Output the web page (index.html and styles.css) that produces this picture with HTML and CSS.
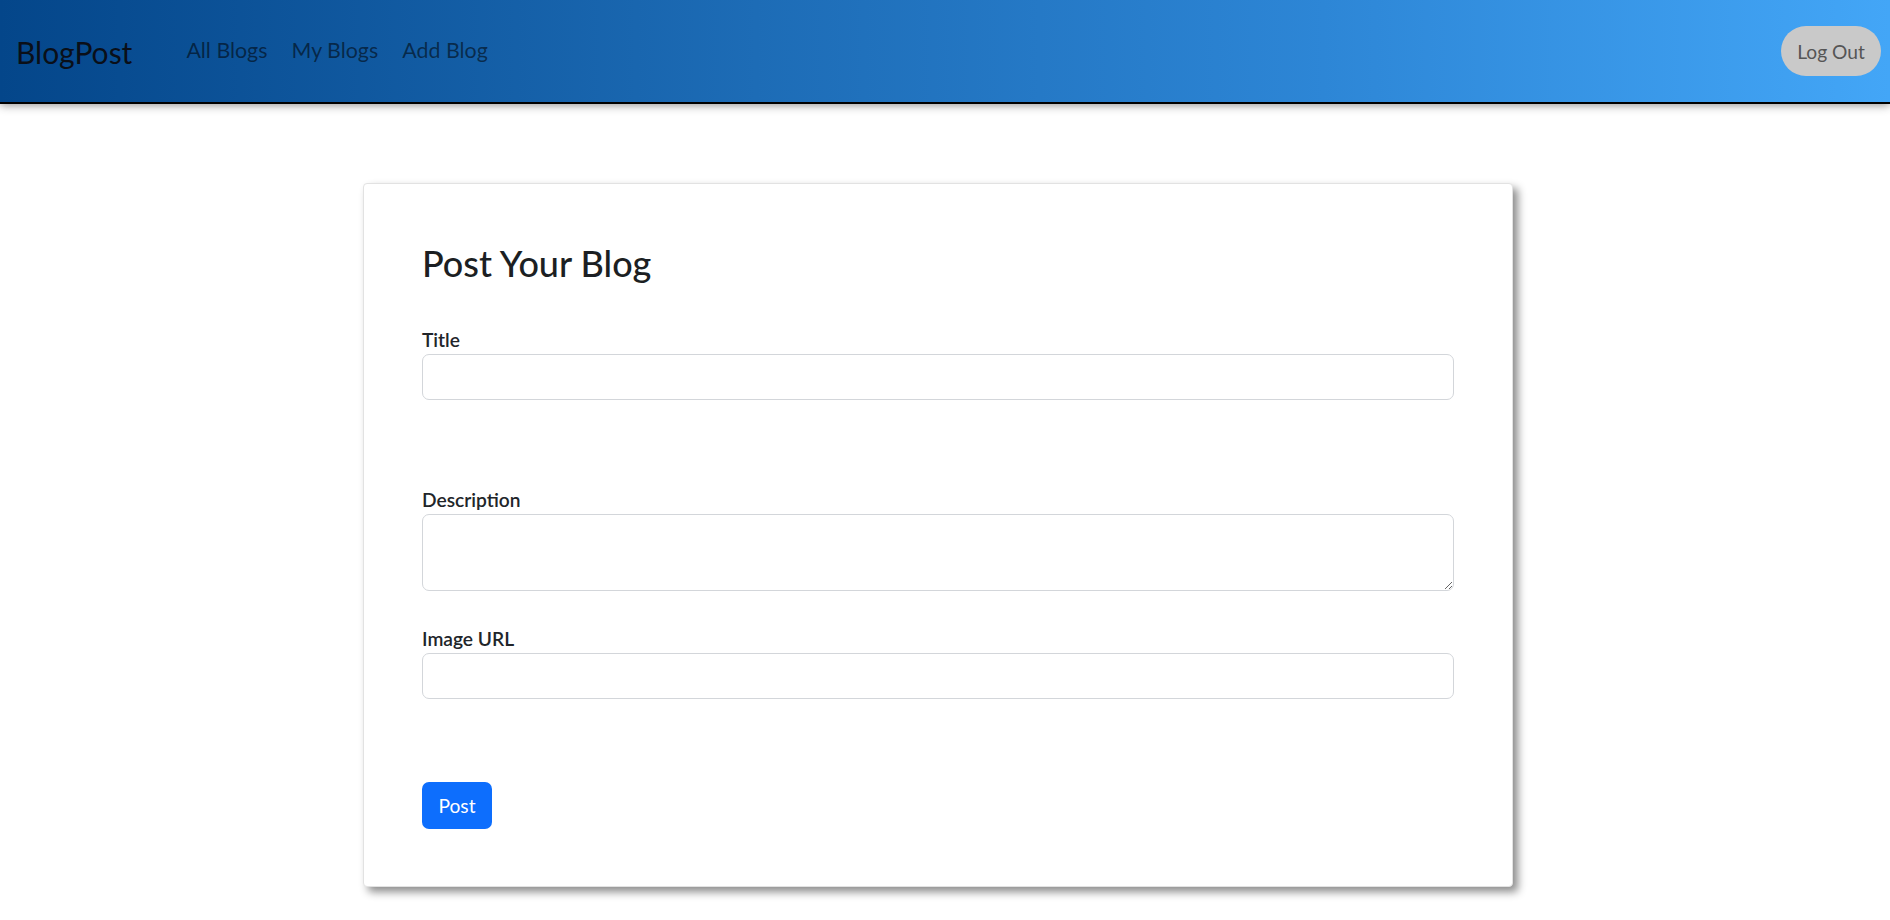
FILE: index.html
```html
<!DOCTYPE html>
<html lang="en">
<head>
<meta charset="utf-8">
<title>BlogPost</title>
<link rel="stylesheet" href="styles.css">
</head>
<body>
<nav class="navbar">
  <a class="brand" href="#">BlogPost</a>
  <ul class="nav-links">
    <li><a href="#">All Blogs</a></li>
    <li><a href="#">My Blogs</a></li>
    <li><a href="#">Add Blog</a></li>
  </ul>
  <button class="logout" type="button">Log Out</button>
</nav>
<main class="page">
  <section class="card">
    <h2 class="card-title">Post Your Blog</h2>
    <form class="blog-form">
      <div class="field field-title">
        <label class="form-label" for="title">Title</label>
        <input class="form-control" id="title" type="text">
      </div>
      <div class="field field-desc">
        <label class="form-label" for="desc">Description</label>
        <textarea class="form-control form-textarea" id="desc"></textarea>
      </div>
      <div class="field field-image">
        <label class="form-label" for="img">Image URL</label>
        <input class="form-control" id="img" type="text">
      </div>
      <button class="btn-post" type="button">Post</button>
    </form>
  </section>
</main>
</body>
</html>
```

FILE: styles.css
```css
* { box-sizing: border-box; }

html, body {
  margin: 0;
  padding: 0;
  background: #fff;
  font-family: "Lato", "Open Sans", sans-serif;
  color: #212529;
}

.navbar {
  height: 102px;
  display: flex;
  align-items: center;
  padding: 0 9px 0 16px;
  background: linear-gradient(90deg, #04468a 0%, #1d6cb6 40%, #2d86d6 70%, #43a6f7 100%);
  box-shadow: 0 2px 0 #000, 0 3px 9px rgba(0, 0, 0, 0.45);
  position: relative;
  z-index: 2;
}

.brand {
  font-size: 30px;
  font-weight: 400;
  color: #0a0f18;
  text-decoration: none;
  line-height: 1;
  margin-right: 54px;
  padding-top: 2px;
}

.nav-links {
  display: flex;
  gap: 24px;
  list-style: none;
  margin: 0;
  padding: 0;
  flex: 1;
}

.nav-links a {
  font-size: 21.4px;
  color: rgba(0, 0, 0, 0.55);
  text-decoration: none;
  line-height: 1;
}

.logout {
  width: 100px;
  height: 50px;
  border: none;
  border-radius: 25px;
  background: #c9c9c9;
  color: #555;
  font-family: inherit;
  font-size: 19.2px;
  padding: 0;
}

.page {
  padding: 81px 0 40px 363px;
}

.card {
  width: 1150px;
  background: #fff;
  border: 1px solid #e2e2e2;
  border-radius: 4px;
  padding: 58px 58px 57px 58px;
  box-shadow: 5px 5px 9px rgba(0, 0, 0, 0.45);
}

.card-title {
  margin: 0 0 40px 0;
  font-size: 36px;
  font-weight: 500;
  line-height: 1.2;
  color: #1c1f23;
}

.blog-form {
  display: flex;
  flex-direction: column;
  align-items: flex-start;
}

.field {
  width: 100%;
  display: flex;
  flex-direction: column;
}

.field-title { margin-bottom: 85px; }
.field-desc { margin-bottom: 33px; }
.field-image { margin-bottom: 83px; }

.form-label {
  font-size: 19.2px;
  line-height: 28.8px;
  font-weight: 600;
  color: #212529;
  padding-top: 1px;
  margin-bottom: -1px;
}

.form-control {
  width: 100%;
  height: 46px;
  border: 1px solid #d3d6da;
  border-radius: 7px;
  background: #fff;
  font-family: inherit;
  font-size: 19.2px;
  padding: 7px 14px;
  margin: 0;
  display: block;
}

.form-textarea {
  height: 77px;
  resize: vertical;
}

.btn-post {
  width: 70px;
  height: 47px;
  border: none;
  border-radius: 7px;
  background: #0d6efd;
  color: #fff;
  font-family: inherit;
  font-size: 19.2px;
  padding: 0;
}
```
